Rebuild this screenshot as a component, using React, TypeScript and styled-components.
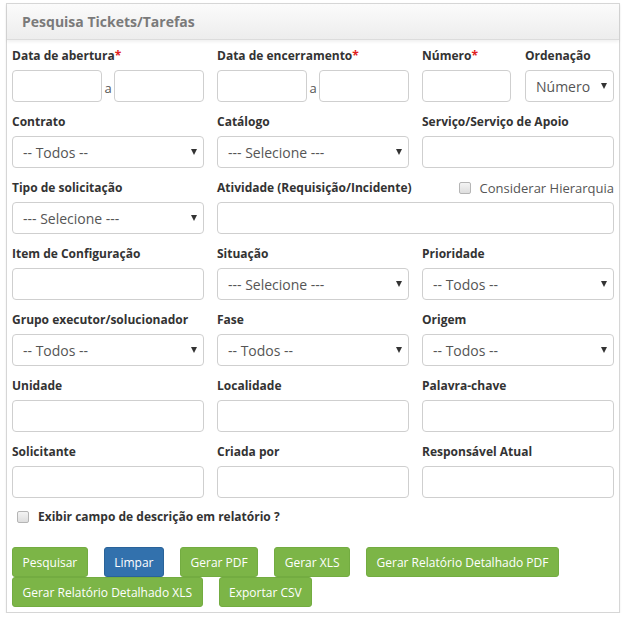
import React from "react";
import styled, { createGlobalStyle } from "styled-components";

const Global = createGlobalStyle`
  html, body { margin: 0; padding: 0; background: #fff; }
  body { font-family: "Open Sans", "Liberation Sans", sans-serif; }
  * { box-sizing: border-box; }
`;

const Panel = styled.div`
  margin: 3px 0 0 6px;
  width: 614px;
  border: 1px solid #d6d6d6;
  box-shadow: 0 1px 2px rgba(0,0,0,0.08);
  background: #fff;
`;

const Header = styled.div`
  height: 36px;
  display: flex;
  align-items: center;
  padding-left: 15px;
  background: linear-gradient(#fbfbfb, #ededed);
  border-bottom: 1px solid #dcdcdc;
  box-shadow: 0 2px 3px rgba(0,0,0,0.06);
`;

const Title = styled.h3`
  margin: 0;
  font-size: 14px;
  font-weight: 700;
  color: #7a7a7a;
`;

const Body = styled.div`
  padding: 7px 5px 5px 5px;
`;

const Grid = styled.div`
  display: grid;
  grid-template-columns: repeat(3, 192px);
  column-gap: 13px;
  row-gap: 11px;
`;

const Field = styled.div<{ $span?: number }>`
  grid-column: span ${(p) => p.$span ?? 1};
  display: flex;
  flex-direction: column;
`;

const SubGrid = styled.div`
  display: grid;
  grid-template-columns: 1fr 1fr;
  column-gap: 14px;
`;

const LabelRow = styled.div`
  display: flex;
  justify-content: space-between;
  align-items: center;
  height: 17px;
  margin-bottom: 6px;
`;

const Label = styled.label`
  font-size: 12px;
  font-weight: 700;
  color: #333;
  line-height: 17px;
  white-space: nowrap;
`;

const Req = styled.span`
  color: #e02020;
`;

const Input = styled.input`
  width: 100%;
  height: 32px;
  border: 1px solid #cfcfcf;
  border-radius: 4px;
  padding: 0 10px;
  font-family: inherit;
  font-size: 14px;
  color: #555;
  background: #fff;
  outline: none;
`;

const RangeRow = styled.div`
  display: grid;
  grid-template-columns: 1fr 12px 1fr;
  align-items: center;
`;

const Sep = styled.span`
  font-size: 13px;
  color: #555;
  text-align: center;
  padding-top: 4px;
`;

const SelectWrap = styled.div`
  position: relative;
  width: 100%;
`;

const Select = styled.select`
  width: 100%;
  height: 32px;
  border: 1px solid #cfcfcf;
  border-radius: 4px;
  padding: 0 22px 0 10px;
  font-family: inherit;
  font-size: 14px;
  color: #555;
  background: #fff;
  appearance: none;
  -webkit-appearance: none;
  outline: none;
`;

const Arrow = styled.span`
  position: absolute;
  right: 7px;
  top: 13px;
  width: 0;
  height: 0;
  border-left: 3px solid transparent;
  border-right: 3px solid transparent;
  border-top: 6px solid #333;
  pointer-events: none;
`;

const CheckLabel = styled.label<{ $bold?: boolean }>`
  display: flex;
  align-items: center;
  gap: 9px;
  font-size: ${(p) => (p.$bold ? "12px" : "13px")};
  font-weight: ${(p) => (p.$bold ? 700 : 400)};
  color: ${(p) => (p.$bold ? "#333" : "#555")};
  white-space: nowrap;
`;

const Check = styled.input`
  appearance: none;
  -webkit-appearance: none;
  margin: 0;
  width: 12px;
  height: 12px;
  border: 1px solid #b5b5b5;
  border-radius: 2px;
  background: linear-gradient(#f4f4f4, #dedede);
`;

const CheckRow = styled.div`
  padding: 10px 0 0 5px;
  height: 49px;
`;

const Buttons = styled.div`
  display: flex;
  flex-wrap: wrap;
  column-gap: 16px;
  row-gap: 0px;
`;

const Button = styled.button<{ $variant?: "green" | "blue" }>`
  height: 30px;
  padding: 0 9.5px;
  border-radius: 3px;
  border: 1px solid ${(p) => (p.$variant === "blue" ? "#2a6399" : "#73ac41")};
  background: ${(p) => (p.$variant === "blue" ? "#3271ad" : "#7cb547")};
  color: #fff;
  font-family: inherit;
  font-size: 12px;
  cursor: pointer;
`;

const SelectBox = ({ value }: { value: string }) => (
  <SelectWrap>
    <Select defaultValue={value}>
      <option>{value}</option>
    </Select>
    <Arrow />
  </SelectWrap>
);

const LabelOnly = ({ children }: { children: React.ReactNode }) => (
  <LabelRow>
    <Label>{children}</Label>
  </LabelRow>
);

export default function App() {
  return (
    <>
      <Global />
      <Panel>
        <Header>
          <Title>Pesquisa Tickets/Tarefas</Title>
        </Header>
        <Body>
          <Grid>
            <Field>
              <LabelOnly>
                Data de abertura<Req>*</Req>
              </LabelOnly>
              <RangeRow>
                <Input />
                <Sep>a</Sep>
                <Input />
              </RangeRow>
            </Field>
            <Field>
              <LabelOnly>
                Data de encerramento<Req>*</Req>
              </LabelOnly>
              <RangeRow>
                <Input />
                <Sep>a</Sep>
                <Input />
              </RangeRow>
            </Field>
            <SubGrid>
              <Field>
                <LabelOnly>
                  Número<Req>*</Req>
                </LabelOnly>
                <Input />
              </Field>
              <Field>
                <LabelOnly>Ordenação</LabelOnly>
                <SelectBox value="Número" />
              </Field>
            </SubGrid>

            <Field>
              <LabelOnly>Contrato</LabelOnly>
              <SelectBox value="-- Todos --" />
            </Field>
            <Field>
              <LabelOnly>Catálogo</LabelOnly>
              <SelectBox value="--- Selecione ---" />
            </Field>
            <Field>
              <LabelOnly>Serviço/Serviço de Apoio</LabelOnly>
              <Input />
            </Field>

            <Field>
              <LabelOnly>Tipo de solicitação</LabelOnly>
              <SelectBox value="--- Selecione ---" />
            </Field>
            <Field $span={2}>
              <LabelRow>
                <Label>Atividade (Requisição/Incidente)</Label>
                <CheckLabel>
                  <Check type="checkbox" />
                  Considerar Hierarquia
                </CheckLabel>
              </LabelRow>
              <Input />
            </Field>

            <Field>
              <LabelOnly>Item de Configuração</LabelOnly>
              <Input />
            </Field>
            <Field>
              <LabelOnly>Situação</LabelOnly>
              <SelectBox value="--- Selecione ---" />
            </Field>
            <Field>
              <LabelOnly>Prioridade</LabelOnly>
              <SelectBox value="-- Todos --" />
            </Field>

            <Field>
              <LabelOnly>Grupo executor/solucionador</LabelOnly>
              <SelectBox value="-- Todos --" />
            </Field>
            <Field>
              <LabelOnly>Fase</LabelOnly>
              <SelectBox value="-- Todos --" />
            </Field>
            <Field>
              <LabelOnly>Origem</LabelOnly>
              <SelectBox value="-- Todos --" />
            </Field>

            <Field>
              <LabelOnly>Unidade</LabelOnly>
              <Input />
            </Field>
            <Field>
              <LabelOnly>Localidade</LabelOnly>
              <Input />
            </Field>
            <Field>
              <LabelOnly>Palavra-chave</LabelOnly>
              <Input />
            </Field>

            <Field>
              <LabelOnly>Solicitante</LabelOnly>
              <Input />
            </Field>
            <Field>
              <LabelOnly>Criada por</LabelOnly>
              <Input />
            </Field>
            <Field>
              <LabelOnly>Responsável Atual</LabelOnly>
              <Input />
            </Field>
          </Grid>
          <CheckRow>
            <CheckLabel $bold>
              <Check type="checkbox" />
              Exibir campo de descrição em relatório ?
            </CheckLabel>
          </CheckRow>
          <Buttons>
            <Button>Pesquisar</Button>
            <Button $variant="blue">Limpar</Button>
            <Button>Gerar PDF</Button>
            <Button>Gerar XLS</Button>
            <Button>Gerar Relatório Detalhado PDF</Button>
            <Button>Gerar Relatório Detalhado XLS</Button>
            <Button>Exportar CSV</Button>
          </Buttons>
        </Body>
      </Panel>
    </>
  );
}
